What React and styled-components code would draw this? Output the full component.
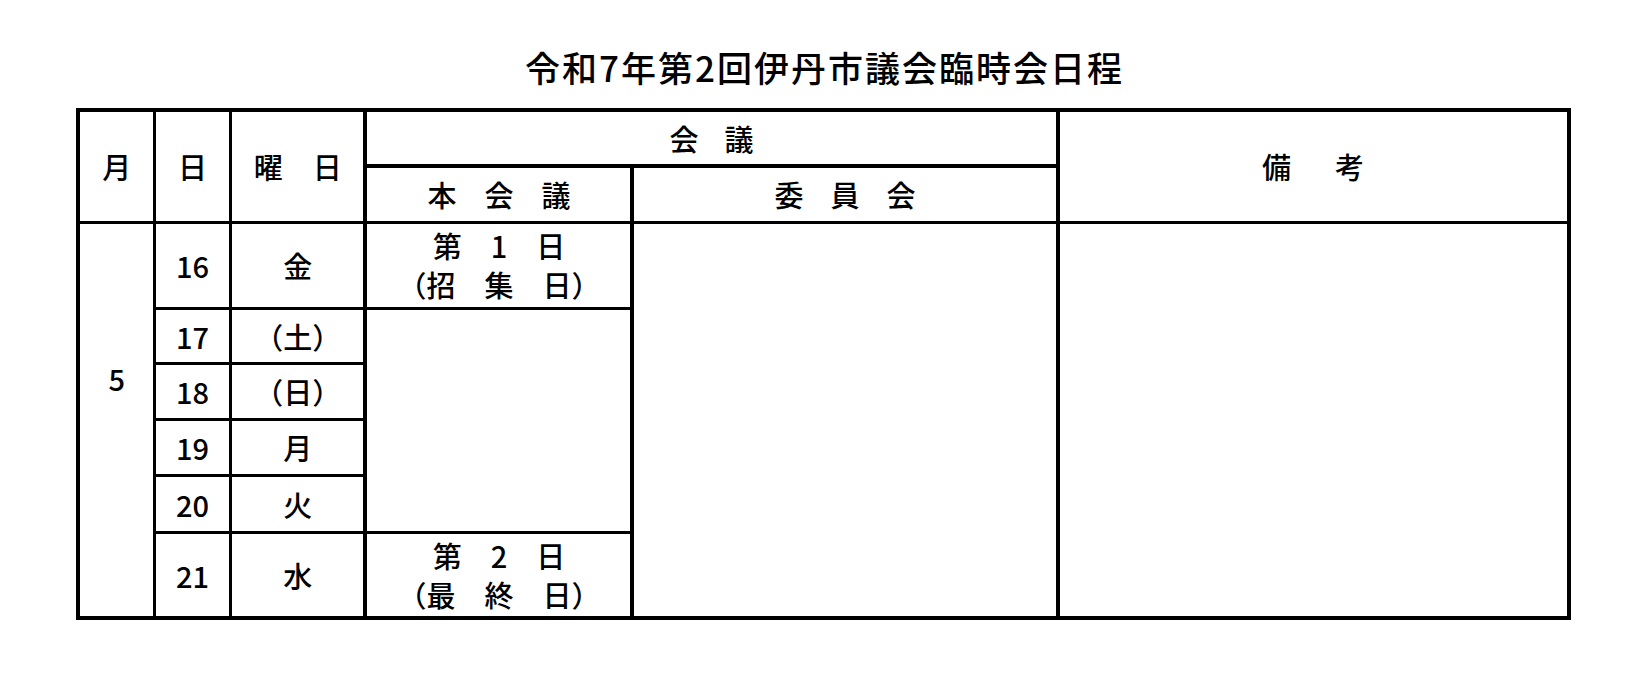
import React from 'react';
import styled, { createGlobalStyle, css } from 'styled-components';

const GlobalStyle = createGlobalStyle`
  html, body { margin: 0; padding: 0; background: #fff; }
  body {
    font-family: "Noto Sans CJK JP", "Noto Sans", sans-serif;
    color: #000;
  }
`;

const Page = styled.main`
  width: 1647px;
  padding-top: 49px;
  display: flex;
  flex-direction: column;
  align-items: center;
`;

const Title = styled.h1`
  margin: 0 0 24px;
  font-size: 35px;
  font-weight: 500;
  line-height: 35px;
  letter-spacing: 2px;
  padding-left: 2px;
`;

const Schedule = styled.table`
  border-collapse: collapse;
  table-layout: fixed;
  width: 1490px;
  border: 4px solid #000;
`;

const Col = styled.col`
  width: ${p => p.$w}px;
`;

const Row = styled.tr`
  height: ${p => p.$h}px;
`;

const cellBase = css`
  padding: 0;
  text-align: center;
  vertical-align: middle;
  font-size: 29px;
  line-height: 40px;
  font-weight: 500;
  white-space: nowrap;
  border: 3px solid #000;
  border-left-width: ${p => p.$left ?? 3}px;
  border-bottom-width: ${p => p.$bottom ?? 3}px;
  ${p => p.$openTop && 'border-top-style: hidden;'}
`;

const HeadCell = styled.th`
  ${cellBase}
`;

const Cell = styled.td`
  ${cellBase}
`;

const Spaced = styled.span`
  letter-spacing: ${p => p.$gap}px;
  margin-right: ${p => -p.$gap}px;
`;

const Line = styled.div`
  white-space: pre;
  line-height: 39px;
`;

const days = [
  { d: '17', w: '（土）', h: 55 },
  { d: '18', w: '（日）', h: 56 },
  { d: '19', w: '月', h: 56 },
  { d: '20', w: '火', h: 57 },
];

export default function App() {
  return (
    <>
      <GlobalStyle />
      <Page>
        <Title>令和7年第2回伊丹市議会臨時会日程</Title>
        <Schedule>
          <colgroup>
            <Col $w={76} />
            <Col $w={76} />
            <Col $w={135} />
            <Col $w={267} />
            <Col $w={425} />
            <Col $w={511} />
          </colgroup>
          <thead>
            <Row $h={56}>
              <HeadCell rowSpan={2}>月</HeadCell>
              <HeadCell rowSpan={2}>日</HeadCell>
              <HeadCell rowSpan={2}><Spaced $gap={30}>曜日</Spaced></HeadCell>
              <HeadCell colSpan={2} $left={4} $bottom={4}><Spaced $gap={26}>会議</Spaced></HeadCell>
              <HeadCell rowSpan={2} $left={4}><Spaced $gap={44}>備考</Spaced></HeadCell>
            </Row>
            <Row $h={56}>
              <HeadCell $left={4}><Spaced $gap={28}>本会議</Spaced></HeadCell>
              <HeadCell $left={4}><Spaced $gap={27}>委員会</Spaced></HeadCell>
            </Row>
          </thead>
          <tbody>
            <Row $h={86}>
              <Cell rowSpan={5}>5</Cell>
              <Cell>16</Cell>
              <Cell>金</Cell>
              <Cell $left={4}>
                <Line>第　1　日</Line>
                <Line>（招　集　日）</Line>
              </Cell>
              <Cell rowSpan={6} $left={4} />
              <Cell rowSpan={6} $left={4} />
            </Row>
            {days.map((r, i) => (
              <Row key={r.d} $h={r.h}>
                <Cell>{r.d}</Cell>
                <Cell>{r.w}</Cell>
                {i === 0 && <Cell rowSpan={4} $left={4} />}
              </Row>
            ))}
            <Row $h={86}>
              <Cell $openTop />
              <Cell>21</Cell>
              <Cell>水</Cell>
              <Cell $left={4}>
                <Line>第　2　日</Line>
                <Line>（最　終　日）</Line>
              </Cell>
            </Row>
          </tbody>
        </Schedule>
      </Page>
    </>
  );
}
